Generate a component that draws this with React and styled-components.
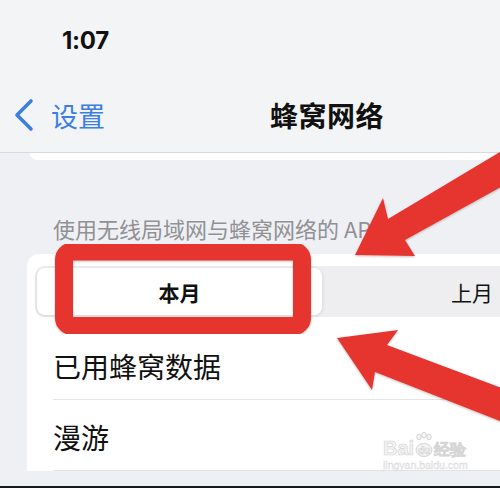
import React from 'react';
import styled, { createGlobalStyle } from 'styled-components';

const Global = createGlobalStyle`
  html, body {
    margin: 0;
    padding: 0;
    background: #f2f3f5;
  }
  body {
    font-family: "Noto Sans CJK SC", "Noto Sans", sans-serif;
  }
`;

const Screen = styled.div`
  position: relative;
  width: 500px;
  height: 488px;
  overflow: hidden;
  background: #eff0f3;
  border-bottom: 2px solid #1a1a1a;
  box-sizing: border-box;
`;

const Top = styled.div`
  background: #f3f4f6;
  border-bottom: 1px solid #d9d9dc;
`;

const StatusBar = styled.div`
  height: 80px;
  display: flex;
  align-items: center;
  padding-left: 62px;
  font-family: Inter, "Liberation Sans", sans-serif;
  font-weight: 700;
  font-size: 24px;
  color: #111;
  letter-spacing: -0.3px;
  box-sizing: border-box;
`;

const NavBar = styled.div`
  height: 72px;
  display: flex;
  align-items: center;
  padding-left: 13px;
  padding-bottom: 2px;
  box-sizing: border-box;
`;

const Back = styled.div`
  display: flex;
  align-items: center;
  gap: 16px;
  color: #3c7ee2;
  font-size: 27px;
  line-height: 1;
`;

const Title = styled.div`
  margin-left: auto;
  margin-right: 116px;
  font-size: 28px;
  font-weight: 700;
  color: #111;
  letter-spacing: 0.5px;
`;

const CardTail = styled.div`
  height: 7px;
  margin-left: 30px;
  background: #fff;
  border-bottom-left-radius: 10px;
`;

const SectionHeader = styled.div`
  padding: 54px 0 12px 53px;
  font-size: 22px;
  line-height: 28px;
  color: #909095;
  white-space: nowrap;
`;

const Card = styled.div`
  margin-left: 27px;
  width: 700px;
  background: #fff;
  border-top-left-radius: 12px;
  padding-top: 12px;
`;

const Segmented = styled.div`
  margin-left: 8px;
  display: flex;
  padding: 2px;
  background: #eeeef0;
  border-radius: 10px;
  height: 51px;
  box-sizing: border-box;
`;

const Segment = styled.div`
  width: ${(p) => p.$w}px;
  display: flex;
  align-items: center;
  justify-content: center;
  font-size: 21px;
  font-weight: ${(p) => (p.$active ? 600 : 400)};
  color: #111;
  background: ${(p) => (p.$active ? '#fff' : 'transparent')};
  border-radius: 8px;
  box-shadow: ${(p) => (p.$active ? '0 1px 4px rgba(0,0,0,0.12)' : 'none')};
`;

const Rows = styled.div`
  padding-top: 12px;
`;

const Row = styled.div`
  margin-left: 26px;
  height: 71px;
  display: flex;
  align-items: center;
  border-bottom: 1px solid #e4e4e7;
  font-size: 28px;
  color: #111;
  padding-top: 3px;
  box-sizing: border-box;
`;

const Watermark = styled.div`
  position: absolute;
  left: 383px;
  top: 432px;
  color: #f4f4f4;
  -webkit-text-stroke: 0.7px #d6d6d6;
  font-family: "Liberation Sans", sans-serif;
  line-height: 1;
`;

const MarkTop = styled.div`
  display: flex;
  align-items: flex-end;
  font-size: 20px;
  font-weight: 700;
  gap: 1px;
`;

const MarkSub = styled.div`
  font-size: 10.5px;
  margin-top: 2px;
  -webkit-text-stroke: 0.4px #d8d8d8;
`;

const Overlay = styled.svg`
  position: absolute;
  left: 0;
  top: 0;
  pointer-events: none;
`;

const Paw = () => (
  <svg width="18" height="26" viewBox="0 0 18 26">
    <g fill="#f4f4f4" stroke="#d4d4d4" strokeWidth="1">
      <ellipse cx="4" cy="5" rx="2.2" ry="2.8" />
      <ellipse cx="9" cy="3" rx="2.2" ry="2.8" />
      <ellipse cx="14" cy="5" rx="2.2" ry="2.8" />
      <ellipse cx="9" cy="18" rx="8" ry="6.5" />
    </g>
    <text x="9" y="22" fontSize="10" fontWeight="700" textAnchor="middle" fill="#f0f0f0" stroke="#d2d2d2" strokeWidth="0.5" fontFamily="Liberation Sans">du</text>
  </svg>
);

export default function App() {
  return (
    <>
      <Global />
      <Screen>
        <Top>
          <StatusBar>1:07</StatusBar>
          <NavBar>
            <Back>
              <svg width="22" height="34" viewBox="0 0 22 34">
                <polyline points="18,3 4,17 18,31" fill="none" stroke="#3c7ee2" strokeWidth="3.6" strokeLinecap="round" strokeLinejoin="round" />
              </svg>
              <span>设置</span>
            </Back>
            <Title>蜂窝网络</Title>
          </NavBar>
        </Top>
        <CardTail />
        <SectionHeader>使用无线局域网与蜂窝网络的 APP</SectionHeader>
        <Card>
          <Segmented>
            <Segment $w={285} $active>本月</Segment>
            <Segment $w={300}>上月</Segment>
          </Segmented>
          <Rows>
            <Row>已用蜂窝数据</Row>
            <Row>漫游</Row>
          </Rows>
        </Card>

        <Watermark>
          <MarkTop>
            <span>Bai</span>
            <Paw />
            <span style={{ fontSize: 16 }}>经验</span>
          </MarkTop>
          <MarkSub>jingyan.baidu.com</MarkSub>
        </Watermark>

        <Overlay width="500" height="488" viewBox="0 0 500 488">
          <defs>
            <filter id="sh" x="-10%" y="-10%" width="120%" height="120%">
              <feDropShadow dx="0" dy="1" stdDeviation="1.2" floodColor="#000" floodOpacity="0.25" />
            </filter>
          </defs>
          <rect x="64" y="251.5" width="238" height="74.5" rx="8" fill="none" stroke="#e6342f" strokeWidth="18" filter="url(#sh)" />
          <polygon
            points="355,255 415,256 405,240 510,182 510,146 388,219 383,198"
            fill="#e6342f"
            filter="url(#sh)"
          />
          <polygon
            points="337,338 398,330 387,345 510,391 510,425 375,372 372,390"
            fill="#e6342f"
            filter="url(#sh)"
          />
        </Overlay>
      </Screen>
    </>
  );
}
